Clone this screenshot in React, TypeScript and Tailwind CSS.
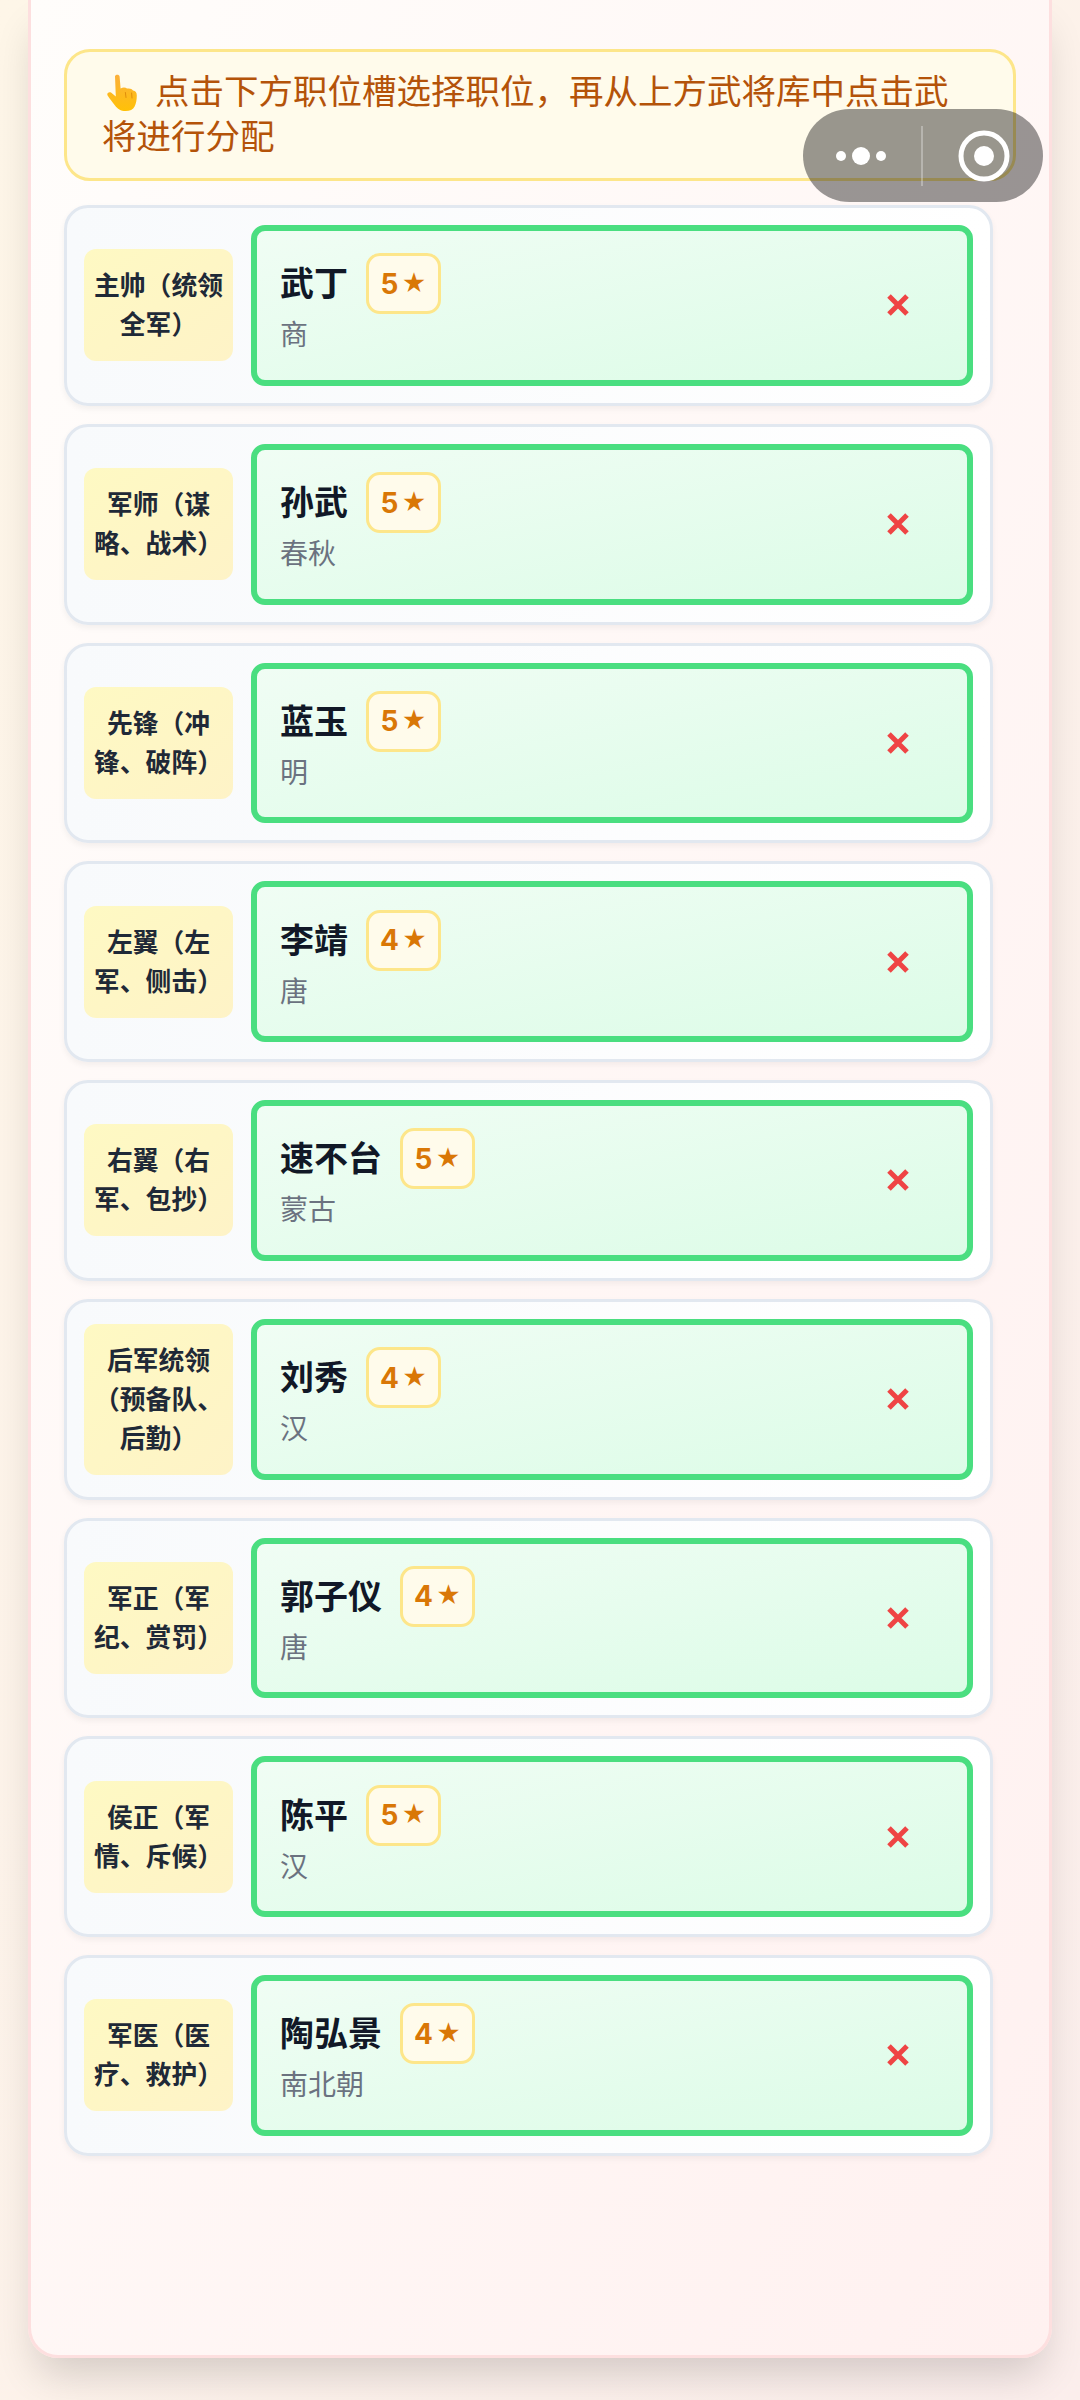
const fontStack = { fontFamily: 'Inter, "Noto Sans CJK SC", sans-serif' }

const slots = [
  { role: '主帅（统领全军）', name: '武丁', stars: 5, era: '商' },
  { role: '军师（谋略、战术）', name: '孙武', stars: 5, era: '春秋' },
  { role: '先锋（冲锋、破阵）', name: '蓝玉', stars: 5, era: '明' },
  { role: '左翼（左军、侧击）', name: '李靖', stars: 4, era: '唐' },
  { role: '右翼（右军、包抄）', name: '速不台', stars: 5, era: '蒙古' },
  { role: '后军统领（预备队、后勤）', name: '刘秀', stars: 4, era: '汉' },
  { role: '军正（军纪、赏罚）', name: '郭子仪', stars: 4, era: '唐' },
  { role: '侯正（军情、斥候）', name: '陈平', stars: 5, era: '汉' },
  { role: '军医（医疗、救护）', name: '陶弘景', stars: 4, era: '南北朝' },
]

function PointingHand() {
  return (
    <svg viewBox="0 0 30 38" className="inline-block w-[30px] h-[38px] ml-[5px] mr-[18px] align-[-7px]">
      <defs>
        <linearGradient id="hand" x1="0" y1="0" x2="0" y2="1">
          <stop offset="0" stopColor="#fbb03b" />
          <stop offset="1" stopColor="#ffc107" />
        </linearGradient>
      </defs>
      <path
        d="M8 3.5C8 1.2 12.4 1 12.6 3.5L13.6 15.5C16 14.2 18.6 14.4 20 15.6C22.6 15 25 15.8 26 17.4C28.6 17.6 29.8 19.6 29.8 22.4C29.8 27 29 30.6 27.6 33.4C26.2 36.6 22.8 38 18.6 38C13.6 38 10.6 35.8 8 32.4C5 28.6 2.8 25.6 0.6 22.4C-0.6 20.4 1.8 18.2 4 19.6L8.8 23.4Z"
        fill="url(#hand)"
      />
      <path d="M18.4 19.5L19 24.5M24.6 20L25 25" stroke="#e08e0b" strokeWidth="1" strokeLinecap="round" />
    </svg>
  )
}

function SlotRow({ slot }: { slot: (typeof slots)[number] }) {
  return (
    <div className="flex items-center gap-[18px] w-[929px] px-[17px] py-[17px] border-[3px] border-[#e2e8f0] rounded-[24px] bg-gradient-to-r from-[#f8fafc] to-white shadow-[0_3px_6px_rgba(0,0,0,0.05)]">
      <div className="w-[149px] shrink-0 px-[9px] py-[17px] rounded-[12px] bg-gradient-to-br from-[#fef9c3] to-[#fef3c7] text-center text-[25.8px] leading-[39px] font-bold text-[#1f2937]">
        {slot.role}
      </div>
      <div className="flex items-center flex-1 h-[160.75px] pl-[23px] pr-[58px] border-[6px] border-[#4ade80] rounded-[14px] bg-gradient-to-br from-[#f0fdf4] to-[#dcfce7]">
        <div className="flex-1">
          <div className="flex items-center gap-[18px]">
            <span className="text-[34px] font-bold text-[#111827]">{slot.name}</span>
            <span className="flex items-center justify-center gap-[3px] w-[75px] h-[61px] border-[3px] border-[#fde68a] rounded-[14px] bg-[#fffbeb] text-[28px] font-bold text-[#d97706]">
              {slot.stars}
              <span className="text-[24px] leading-none">★</span>
            </span>
          </div>
          <div className="text-[28px] leading-[43px] text-[#6b7280]">{slot.era}</div>
        </div>
        <svg viewBox="0 0 22 22" className="w-[22px] h-[22px] shrink-0">
          <path d="M2 2L20 20M20 2L2 20" stroke="#ef4444" strokeWidth="5" />
        </svg>
      </div>
    </div>
  )
}

export default function App() {
  return (
    <div
      className="relative h-[2400px] overflow-hidden bg-gradient-to-br from-[#fef6e8] to-[#fbeeec]"
      style={fontStack}
    >
      <div className="mx-[28px] w-[1024px] h-[2358px] px-[33px] pt-[49px] border-[3px] border-t-0 border-[#fddfdf] rounded-b-[30px] bg-gradient-to-br from-[#fffdfb] to-[#fff1f0] shadow-[0_24px_40px_-8px_rgba(0,0,0,0.16)]">
        <div className="mb-[24px] px-[35px] pt-[17px] pb-[19px] border-[3px] border-[#fde68a] rounded-[26px] bg-[#fffbeb] text-[34.5px] leading-[45px] text-[#b45309]">
          <PointingHand />
          点击下方职位槽选择职位，再从上方武将库中点击武将进行分配
        </div>
        <div className="flex flex-col gap-[18px]">
          {slots.map((slot) => (
            <SlotRow key={slot.role} slot={slot} />
          ))}
        </div>
      </div>

      <div className="absolute left-[803px] top-[109px] flex items-center w-[240px] h-[93px] rounded-full bg-black/40">
        <svg viewBox="0 0 240 93" className="w-[240px] h-[93px]">
          <circle cx="38" cy="47" r="5" fill="#fff" />
          <circle cx="58" cy="47" r="9" fill="#fff" />
          <circle cx="78" cy="47" r="5" fill="#fff" />
          <rect x="118" y="17" width="2" height="60" fill="#fff" fillOpacity="0.3" />
          <circle cx="181" cy="47" r="23" fill="none" stroke="#fff" strokeWidth="5" />
          <circle cx="181" cy="47" r="10" fill="#fff" />
        </svg>
      </div>
    </div>
  )
}
